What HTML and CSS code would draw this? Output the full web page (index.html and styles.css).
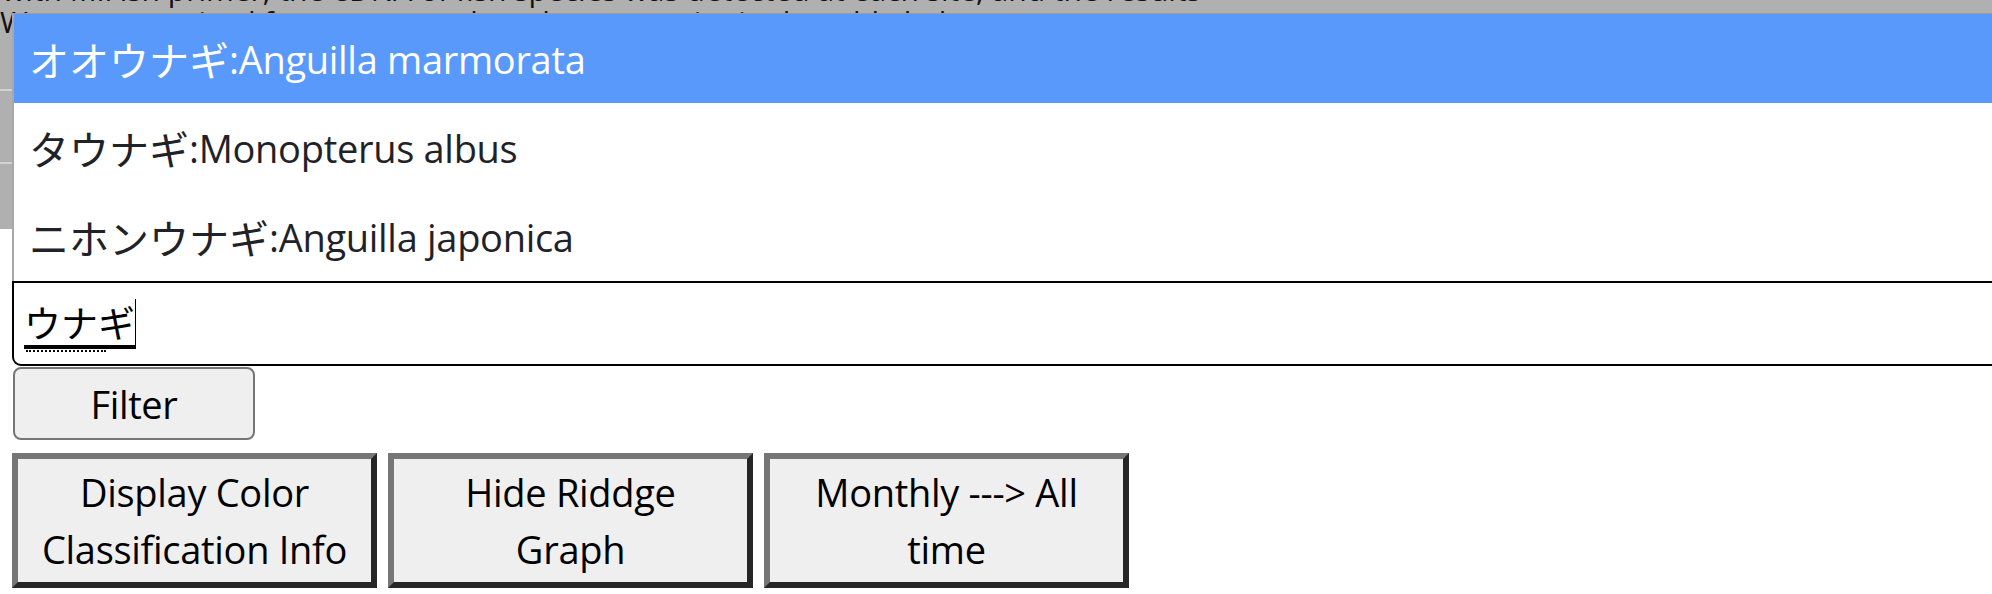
FILE: index.html
```html
<!DOCTYPE html>
<html lang="ja">
<head>
<meta charset="utf-8">
<title>Species filter</title>
<link rel="stylesheet" href="styles.css">
</head>
<body>
<div class="backdrop">
  <div class="bd-block">
    <p class="bd-text">with MiFish primer, the eDNA of fish species was detected at each site, and the results</p>
    <p class="bd-text">Were summarised for every month and survey point in the table below</p>
  </div>
  <div class="bd-row"></div>
  <div class="bd-row"></div>
</div>
<div class="search">
  <div class="combo">
    <ul class="options">
      <li class="option selected"><span class="ja">オオウナギ</span>:Anguilla marmorata</li>
      <li class="option"><span class="ja">タウナギ</span>:Monopterus albus</li>
      <li class="option"><span class="ja">ニホンウナギ</span>:Anguilla japonica</li>
    </ul>
    <div class="search-input"><span class="compose">ウナギ</span><span class="caret"></span></div>
  </div>
  <button class="filter" type="button">Filter</button>
  <div class="actions">
    <button class="big" type="button">Display Color Classification Info</button>
    <button class="big" type="button">Hide Riddge Graph</button>
    <button class="big" type="button">Monthly ---&gt; All time</button>
  </div>
</div>
</body>
</html>
```
FILE: styles.css
```css
html, body {
  margin: 0;
  padding: 0;
  background: #ffffff;
  overflow: hidden;
}
body {
  font-family: "Open Sans", "Noto Sans CJK JP", sans-serif;
  color: #000;
}
.backdrop {
  height: 229px;
  background: #b0b0b0;
  overflow: hidden;
}
.bd-block {
  height: 89px;
  border-bottom: 2px solid #d2d2d2;
  overflow: hidden;
}
.bd-text {
  margin: 0;
  font-size: 30px;
  line-height: 30px;
  white-space: nowrap;
  color: #111;
}
.bd-text:first-child {
  margin-top: -25px;
  margin-bottom: 2px;
  padding-left: 2px;
}
.bd-row {
  height: 71px;
  border-bottom: 2px solid #d2d2d2;
}
.search {
  margin-top: 52px;
  padding-left: 12px;
}
.combo {
  position: relative;
}
.options {
  position: absolute;
  left: 0;
  right: -60px;
  bottom: 100%;
  margin: 0;
  padding: 0;
  list-style: none;
  background: #fff;
  border-top: 1px solid #9c9c9c;
  border-left: 2px solid #a8a8a8;
}
.option {
  height: 89px;
  display: flex;
  align-items: center;
  padding-left: 15px;
  font-size: 38px;
  letter-spacing: -0.3px;
  line-height: 52px;
  color: #1f2328;
  white-space: nowrap;
}
.option .ja {
  font-family: "Noto Sans CJK JP", sans-serif;
  font-size: 40px;
  letter-spacing: 0;
}
.option.selected {
  background: #5999fb;
  color: #ffffff;
}
.search-input {
  box-sizing: border-box;
  height: 85px;
  margin-right: -60px;
  border: 2px solid #000;
  border-radius: 0 0 0 9px;
  padding-left: 10px;
  display: flex;
  align-items: center;
  font-family: "Noto Sans CJK JP", sans-serif;
  font-size: 37px;
  color: #000;
}
.compose {
  position: relative;
  line-height: 46px;
  border-bottom: 4px solid #000;
}
.compose::after {
  content: "";
  position: absolute;
  left: 2px;
  width: 80px;
  bottom: -7px;
  border-bottom: 2px dotted #000;
}
.caret {
  width: 1px;
  height: 50px;
  background: #000;
}
.filter {
  display: block;
  box-sizing: border-box;
  margin: 1px 0 0 1px;
  width: 242px;
  height: 73px;
  border: 2px solid #767676;
  border-radius: 8px;
  background: #efefef;
  font-family: "Open Sans", sans-serif;
  font-size: 38px;
  letter-spacing: -0.4px;
  color: #000;
  padding: 0;
}
.actions {
  display: flex;
  gap: 11px;
  margin-top: 13px;
}
.big {
  box-sizing: border-box;
  width: 365px;
  height: 135px;
  padding: 0 18px;
  border-style: solid;
  border-width: 6px;
  border-color: #767676 #262626 #262626 #767676;
  background: #efefef;
  font-family: "Open Sans", sans-serif;
  font-size: 38px;
  letter-spacing: -0.3px;
  line-height: 57px;
  color: #000;
  text-align: center;
}
```
